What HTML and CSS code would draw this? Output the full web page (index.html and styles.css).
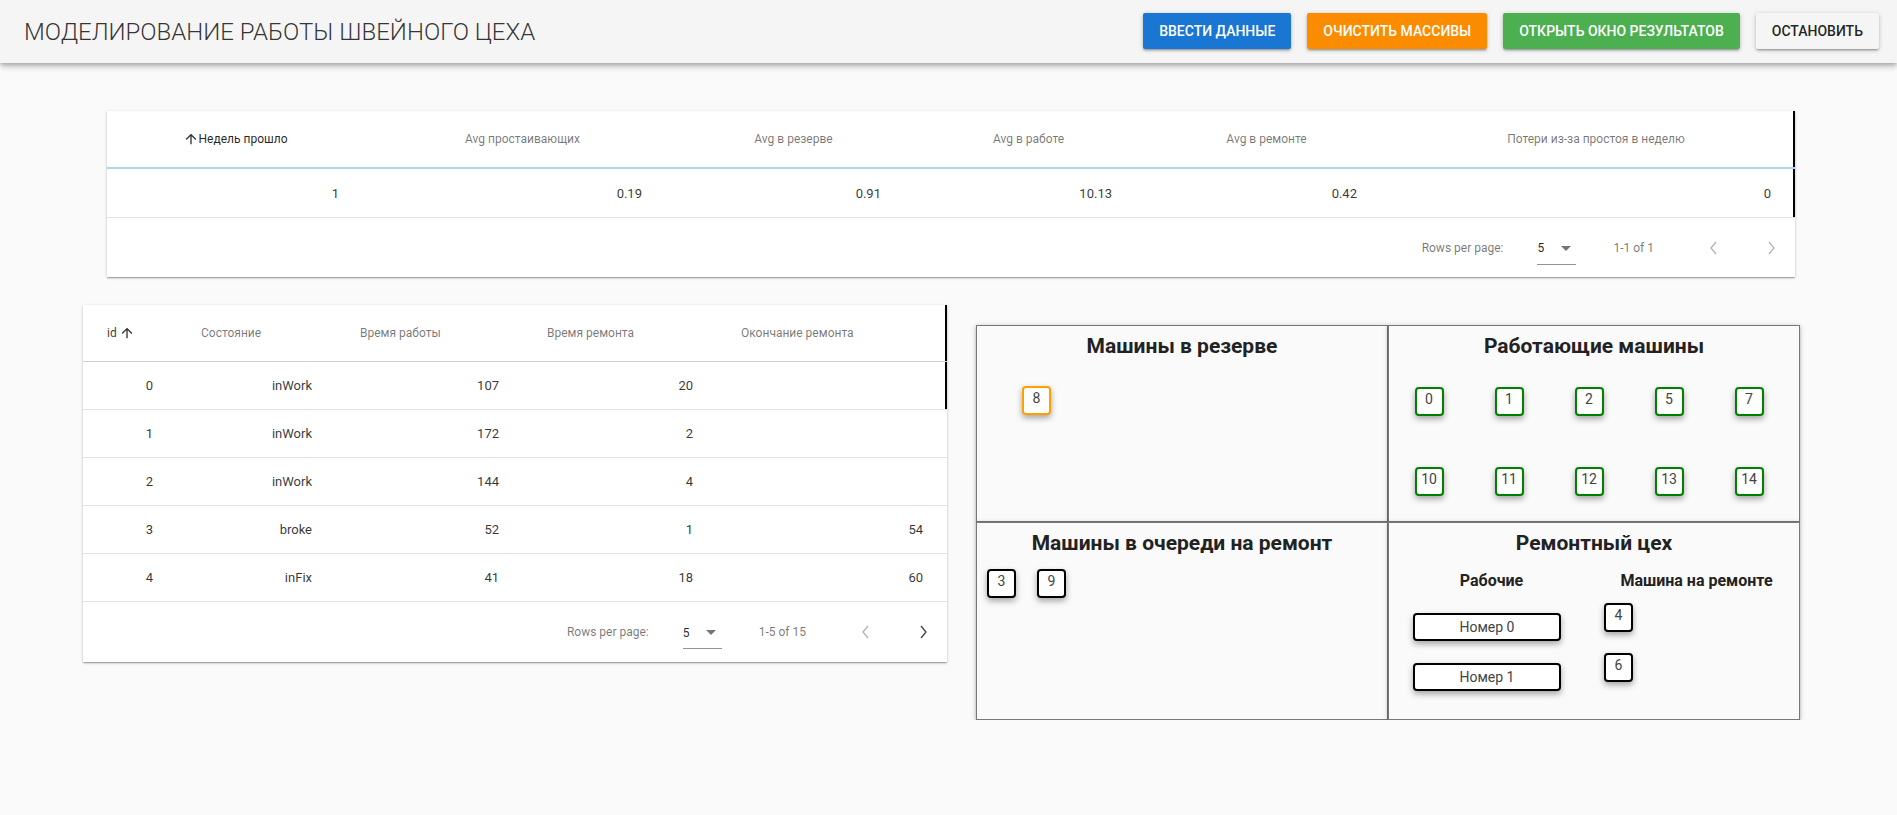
FILE: index.html
```html
<!DOCTYPE html>
<html lang="ru">
<head>
<meta charset="utf-8">
<title>Моделирование работы швейного цеха</title>
<link rel="stylesheet" href="styles.css">
</head>
<body>
<header class="appbar">
  <h1 class="app-title">МОДЕЛИРОВАНИЕ РАБОТЫ ШВЕЙНОГО ЦЕХА</h1>
  <div class="actions">
    <button class="btn btn-blue">Ввести данные</button>
    <button class="btn btn-orange">Очистить массивы</button>
    <button class="btn btn-green">Открыть окно результатов</button>
    <button class="btn btn-grey">Остановить</button>
  </div>
</header>

<main class="content">
  <section class="paper stats">
    <div class="stats-row stats-head edge">
      <div class="th sorted"><svg class="sort-icon" viewBox="0 0 24 24"><path d="M4 12l1.41 1.41L11 7.83V20h2V7.83l5.58 5.59L20 12l-8-8-8 8z"/></svg><span>Недель прошло</span></div>
      <div class="th"><span class="icon-space"></span><span>Avg простаивающих</span></div>
      <div class="th"><span class="icon-space"></span><span>Avg в резерве</span></div>
      <div class="th"><span class="icon-space"></span><span>Avg в работе</span></div>
      <div class="th"><span class="icon-space"></span><span>Avg в ремонте</span></div>
      <div class="th"><span class="icon-space"></span><span>Потери из-за простоя в неделю</span></div>
    </div>
    <div class="stats-row stats-body edge">
      <div class="td">1</div>
      <div class="td">0.19</div>
      <div class="td">0.91</div>
      <div class="td">10.13</div>
      <div class="td">0.42</div>
      <div class="td">0</div>
    </div>
    <div class="pager pager-top">
      <span class="pager-caption">Rows per page:</span>
      <span class="pager-select"><span class="pager-value">5</span><svg class="caret" viewBox="0 0 10 5"><path d="M0 0h10L5 5z"/></svg></span>
      <span class="pager-caption pager-range">1-1 of 1</span>
      <span class="pager-btn disabled"><svg viewBox="0 0 10 16"><path d="M7 2L2 8l5 6"/></svg></span>
      <span class="pager-btn disabled"><svg viewBox="0 0 10 16"><path d="M3 2l5 6-5 6"/></svg></span>
    </div>
  </section>

  <div class="lower">
    <section class="paper machines">
      <div class="m-row m-head edge">
        <div class="mh mh-sorted">id<svg class="sort-icon after" viewBox="0 0 24 24"><path d="M4 12l1.41 1.41L11 7.83V20h2V7.83l5.58 5.59L20 12l-8-8-8 8z"/></svg></div>
        <div class="mh">Состояние</div>
        <div class="mh">Время работы</div>
        <div class="mh">Время ремонта</div>
        <div class="mh">Окончание ремонта</div>
      </div>
      <div class="m-row m-body edge first">
        <div class="md">0</div><div class="md">inWork</div><div class="md">107</div><div class="md">20</div><div class="md"></div>
      </div>
      <div class="m-row m-body">
        <div class="md">1</div><div class="md">inWork</div><div class="md">172</div><div class="md">2</div><div class="md"></div>
      </div>
      <div class="m-row m-body">
        <div class="md">2</div><div class="md">inWork</div><div class="md">144</div><div class="md">4</div><div class="md"></div>
      </div>
      <div class="m-row m-body">
        <div class="md">3</div><div class="md">broke</div><div class="md">52</div><div class="md">1</div><div class="md">54</div>
      </div>
      <div class="m-row m-body">
        <div class="md">4</div><div class="md">inFix</div><div class="md">41</div><div class="md">18</div><div class="md">60</div>
      </div>
      <div class="pager pager-bottom">
        <span class="pager-caption">Rows per page:</span>
        <span class="pager-select"><span class="pager-value">5</span><svg class="caret" viewBox="0 0 10 5"><path d="M0 0h10L5 5z"/></svg></span>
        <span class="pager-caption pager-range">1-5 of 15</span>
        <span class="pager-btn disabled"><svg viewBox="0 0 10 16"><path d="M7 2L2 8l5 6"/></svg></span>
        <span class="pager-btn"><svg viewBox="0 0 10 16"><path d="M3 2l5 6-5 6"/></svg></span>
      </div>
    </section>

    <section class="board">
      <div class="zone zone-reserve">
        <h2 class="zone-title">Машины в резерве</h2>
        <div class="reserve-list">
          <div class="chip chip-orange">8</div>
        </div>
      </div>
      <div class="zone zone-work">
        <h2 class="zone-title">Работающие машины</h2>
        <div class="work-grid">
          <div class="cell"><div class="chip chip-green">0</div></div>
          <div class="cell"><div class="chip chip-green">1</div></div>
          <div class="cell"><div class="chip chip-green">2</div></div>
          <div class="cell"><div class="chip chip-green">5</div></div>
          <div class="cell"><div class="chip chip-green">7</div></div>
          <div class="cell"><div class="chip chip-green">10</div></div>
          <div class="cell"><div class="chip chip-green">11</div></div>
          <div class="cell"><div class="chip chip-green">12</div></div>
          <div class="cell"><div class="chip chip-green">13</div></div>
          <div class="cell"><div class="chip chip-green">14</div></div>
        </div>
      </div>
      <div class="zone zone-queue">
        <h2 class="zone-title">Машины в очереди на ремонт</h2>
        <div class="queue-list">
          <div class="chip chip-black">3</div>
          <div class="chip chip-black">9</div>
        </div>
      </div>
      <div class="zone zone-repair">
        <h2 class="zone-title">Ремонтный цех</h2>
        <div class="repair-cols">
          <div class="repair-col workers">
            <h3 class="sub-title">Рабочие</h3>
            <div class="worker">Номер 0</div>
            <div class="worker">Номер 1</div>
          </div>
          <div class="repair-col fixing">
            <h3 class="sub-title">Машина на ремонте</h3>
            <div class="chip chip-black">4</div>
            <div class="chip chip-black">6</div>
          </div>
        </div>
      </div>
    </section>
  </div>
</main>
</body>
</html>
```

FILE: styles.css
```css
* { box-sizing: border-box; }

html, body {
  margin: 0;
  padding: 0;
  background: #fafafa;
  font-family: Roboto, "Noto Sans", "Liberation Sans", sans-serif;
  color: rgba(0, 0, 0, 0.87);
}

/* ---------- App bar ---------- */
.appbar {
  height: 63px;
  display: flex;
  align-items: center;
  justify-content: space-between;
  padding: 0 18px 0 24px;
  background: #f5f5f5;
  box-shadow: 0 2px 4px -1px rgba(0,0,0,0.2), 0 4px 5px 0 rgba(0,0,0,0.14), 0 1px 10px 0 rgba(0,0,0,0.12);
  position: relative;
  z-index: 2;
}

.app-title {
  margin: 0;
  font-size: 24px;
  font-weight: 300;
  color: rgba(0, 0, 0, 0.8);
  letter-spacing: 0;
  line-height: 1;
}

.actions {
  display: flex;
  gap: 16px;
  align-self: flex-start;
  margin-top: 13px;
}

.btn {
  height: 36px;
  padding: 0 16px;
  border: none;
  border-radius: 2px;
  font-family: Roboto, sans-serif;
  font-size: 14px;
  font-weight: 500;
  text-transform: uppercase;
  color: #fff;
  box-shadow: 0 1px 5px 0 rgba(0,0,0,0.2), 0 2px 2px 0 rgba(0,0,0,0.14), 0 3px 1px -2px rgba(0,0,0,0.12);
  cursor: pointer;
}
.btn-blue { background: #1976d2; }
.btn-orange { background: #fb8c00; }
.btn-green { background: #4caf50; }
.btn-grey { background: #f5f5f5; color: rgba(0,0,0,0.87); }

/* ---------- Content ---------- */
.content {
  padding: 48px 0 0 0;
}

.paper {
  background: #fff;
  box-shadow: 0 1px 3px 0 rgba(0,0,0,0.2), 0 1px 1px 0 rgba(0,0,0,0.14), 0 2px 1px -1px rgba(0,0,0,0.12);
}

.edge { box-shadow: inset -2px 0 0 #000; }

/* ---------- Stats table ---------- */
.stats {
  margin-left: 107px;
  width: 1688px;
}

.stats-row {
  display: grid;
  grid-template-columns: 256px 303px 239px 231px 245px 414px;
}

.stats-head {
  height: 58px;
  border-bottom: 2px solid #b3d3ef;
}

.th {
  display: flex;
  align-items: center;
  justify-content: center;
  padding: 0 24px;
  font-size: 12px;
  font-weight: 400;
  color: rgba(0,0,0,0.54);
}
.th.sorted { color: rgba(0,0,0,0.87); }

.sort-icon {
  width: 16px;
  height: 16px;
  fill: rgba(0,0,0,0.8);
  flex: none;
}
.icon-space { width: 16px; flex: none; }

.stats-body {
  height: 49px;
  border-bottom: 1px solid #e0e0e0;
}

.td {
  display: flex;
  align-items: center;
  justify-content: flex-end;
  padding: 0 24px;
  font-size: 13px;
  color: rgba(0,0,0,0.8);
}

/* ---------- Pagination ---------- */
.pager {
  display: flex;
  align-items: center;
  justify-content: flex-end;
  height: 59px;
  padding-right: 0;
  font-size: 12px;
  color: rgba(0,0,0,0.54);
}

.pager-select {
  display: flex;
  align-items: center;
  height: 32px;
  width: 39px;
  margin-left: 34px;
  margin-right: 37px;
  border-bottom: 1px solid rgba(0,0,0,0.42);
  color: rgba(0,0,0,0.87);
  font-size: 12px;
  position: relative;
  top: 1px;
}
.pager-value { margin-right: 17px; }
.caret { width: 10px; height: 5px; fill: rgba(0,0,0,0.54); }

.pager-range { margin-right: 27px; }

.pager-btn {
  width: 48px;
  height: 48px;
  display: flex;
  align-items: center;
  justify-content: center;
  margin-left: 9px;
}
.pager-btn svg {
  width: 10px;
  height: 16px;
  fill: none;
  stroke: rgba(0,0,0,0.75);
  stroke-width: 1.3;
}
.pager-btn.disabled svg { stroke: rgba(0,0,0,0.3); }

/* ---------- Lower area ---------- */
.lower {
  display: flex;
  align-items: flex-start;
  margin-top: 28px;
  padding-left: 83px;
  gap: 29px;
}

.machines { width: 864px; }

.m-row {
  display: grid;
  grid-template-columns: 94px 159px 187px 194px 230px;
}

.m-head {
  height: 57px;
  border-bottom: 1px solid #d0d0d0;
}
.mh {
  display: flex;
  align-items: center;
  padding: 0 24px;
  font-size: 12px;
  font-weight: 400;
  color: rgba(0,0,0,0.54);
}
.mh-sorted { color: rgba(0,0,0,0.8); }
.sort-icon.after { margin-left: 2px; }

.m-body {
  height: 48px;
  border-bottom: 1px solid #e0e0e0;
}

.md {
  display: flex;
  align-items: center;
  justify-content: flex-end;
  padding: 0 24px;
  font-size: 13px;
  color: rgba(0,0,0,0.8);
}

.pager-bottom { height: 60px; }

/* ---------- Board ---------- */
.board {
  margin-top: 20px;
  display: grid;
  grid-template-columns: 412px 412px;
  grid-template-rows: 197px 198px;
}

.zone {
  background: #fafafa;
  border: 1px solid #777;
  box-shadow: 0 1px 5px 0 rgba(0,0,0,0.25), 0 2px 2px 0 rgba(0,0,0,0.14);
  padding-top: 8px;
}

.zone-title {
  margin: 0;
  text-align: center;
  font-size: 21px;
  font-weight: 700;
  line-height: 25px;
  color: #222;
}

.chip {
  width: 29px;
  height: 29px;
  border: 2px solid #000;
  border-radius: 4px;
  background: #fff;
  font-size: 14px;
  line-height: 20px;
  text-align: center;
  color: #444;
  box-shadow: 0 3px 6px rgba(0,0,0,0.35);
}
.chip-orange { border-color: #ffa000; }
.chip-green { border-color: #008000; }
.chip-black { border-color: #000; }

.reserve-list {
  display: flex;
  padding: 27px 0 0 45px;
}

.work-grid {
  display: grid;
  grid-template-columns: repeat(5, 80px);
  row-gap: 51px;
  margin-top: 28px;
}
.cell { display: flex; justify-content: center; }

.queue-list {
  display: flex;
  gap: 21px;
  padding: 13px 0 0 10px;
}

.repair-cols {
  display: grid;
  grid-template-columns: 205px 205px;
  margin-top: 15px;
}
.sub-title {
  margin: 0 0 0 0;
  font-size: 16px;
  font-weight: 700;
  line-height: 20px;
  text-align: center;
  color: #222;
}
.workers .sub-title { margin-bottom: 22px; }
.fixing .sub-title { margin-bottom: 12px; }

.worker {
  width: 148px;
  height: 28px;
  margin: 0 0 22px 24px;
  border: 2px solid #000;
  border-radius: 4px;
  background: #fff;
  font-size: 14px;
  line-height: 24px;
  text-align: center;
  color: #444;
  box-shadow: 0 3px 6px rgba(0,0,0,0.35);
}

.fixing .chip {
  margin: 0 0 21px 10px;
}
```
